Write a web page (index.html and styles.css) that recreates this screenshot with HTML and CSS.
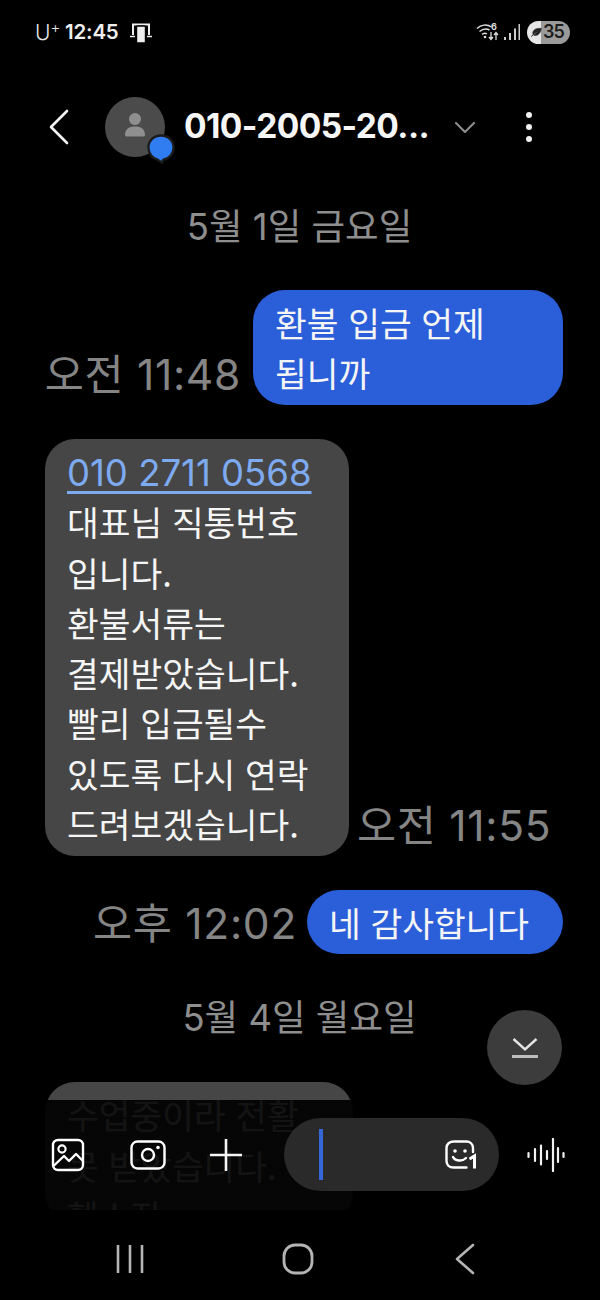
FILE: index.html
```html
<!DOCTYPE html>
<html lang="ko">
<head>
<meta charset="utf-8">
<title>메시지</title>
<link rel="stylesheet" href="styles.css">
</head>
<body>
<div class="screen">
  <div class="status">
    <span class="carrier">U<sup>+</sup></span>
    <span class="clock">12:45</span>
    <svg class="st-cast" width="22" height="22" viewBox="0 0 22 22"><path d="M3 14V3.500h16V14" fill="none" stroke="#eee" stroke-width="2"/><rect x="6.500" y="5" width="9" height="17" rx="1" fill="#eee" stroke="#000" stroke-width="1.400"/><path d="M0 15.500h5M17 15.500h5" stroke="#eee" stroke-width="1.600"/></svg>
    <span class="st-space"></span>
    <svg class="st-wifi" width="24" height="20" viewBox="0 0 24 20"><g fill="none" stroke="#ddd" stroke-width="1.500"><path d="M1 6.500C5 2.500 11 2 15.500 5"/><path d="M3.500 9.500C7 6.500 10.500 6.300 13.500 8"/><path d="M6 12.500C7.500 11 9.500 11 11 12"/></g><circle cx="9" cy="15" r="1.300" fill="#ddd"/><text x="15" y="7.500" class="st-six">6</text><path d="M15 10v7M13 15l2 2.500 2-2.500M20 18v-7M18 13l2-2.500 2 2.500" fill="none" stroke="#ddd" stroke-width="1.300"/></svg>
    <svg class="st-signal" width="16" height="16" viewBox="0 0 16 16"><path d="M1 16v-3M6 16V9M11 16V4.500M15.500 16V0" stroke="#ccc" stroke-width="2"/></svg>
    <div class="battery">
      <svg class="leaf" width="11" height="11" viewBox="0 0 15 13"><path d="M14 1C8 .5 3 2 2.500 7c-.2 2 1 3.500 3 3.500C11 10.500 13 6 14 1zM0 12.500C3 8.500 6 6.500 9 5" fill="#222" stroke="#222" stroke-width="1"/></svg>
      <span class="batt-num">35</span>
    </div>
  </div>

  <header class="head">
    <svg class="back" width="20" height="36" viewBox="0 0 20 36"><path d="M18 2 2 18l16 16" fill="none" stroke="#f2f2f2" stroke-width="2.600" stroke-linecap="round" stroke-linejoin="round"/></svg>
    <div class="avatar">
      <svg width="60" height="60" viewBox="0 0 60 60"><circle cx="30" cy="22" r="6" fill="#8f8f8f"/><path d="M20 38c0-6 4-8.500 10-8.500S40 32 40 38c0 1-1 1.500-2 1.500H22c-1 0-2-.5-2-1.500z" fill="#8f8f8f"/></svg>
      <svg class="chat-badge" width="28" height="30" viewBox="0 0 30 32"><path d="M15 1.500C7.500 1.500 1.500 7 1.500 14.500c0 6.500 4.500 11.500 10 13l4.500 3 1.500-3c6.500-1 11-6.500 11-13C28.500 7 22.500 1.500 15 1.500z" fill="#2f7df0" stroke="#1c1c1c" stroke-width="2.500"/></svg>
    </div>
    <h1 class="title">010-2005-20...</h1>
    <svg class="caret" width="22" height="13" viewBox="0 0 22 13"><path d="M2 2l9 9 9-9" fill="none" stroke="#8a8a8a" stroke-width="2.200" stroke-linecap="round" stroke-linejoin="round"/></svg>
    <div class="kebab"><i></i><i></i><i></i></div>
  </header>

  <main class="thread">
    <div class="date date-a">5월 1일 금요일</div>

    <div class="row row-out row-1">
      <time class="stamp">오전 11:48</time>
      <div class="bubble out b1">환불 입금 언제<br>됩니까</div>
    </div>

    <div class="row row-in row-2">
      <div class="bubble in b2"><a class="tel">010 2711 0568</a><br>대표님 직통번호<br>입니다.<br>환불서류는<br>결제받았습니다.<br>빨리 입금될수<br>있도록 다시 연락<br>드려보겠습니다.</div>
      <time class="stamp">오전 11:55</time>
    </div>

    <div class="row row-out row-3">
      <time class="stamp">오후 12:02</time>
      <div class="bubble out b3">네 감사합니다</div>
    </div>

    <div class="date date-b">5월 4일 월요일</div>

    <div class="row row-in row-4">
      <div class="bubble in b4">수업중이라 전활<br>못 받았습니다.<br>헬스장</div>
    </div>
  </main>

  <div class="scrim"></div>

  <button class="scroll-down">
    <svg width="30" height="22" viewBox="0 0 30 22"><path d="M3.500 2 15 12.500 26.500 2" fill="none" stroke="#e4e4e4" stroke-width="2.400"/><path d="M2 19.500h26" stroke="#bdbdbd" stroke-width="3"/></svg>
  </button>

  <div class="composer">
    <svg class="ic-gallery" width="34" height="34" viewBox="0 0 34 34"><rect x="2" y="2" width="30" height="30" rx="5" fill="none" stroke="#fff" stroke-width="2.400"/><circle cx="11" cy="11" r="3.600" fill="none" stroke="#fff" stroke-width="2.200"/><path d="M2.500 28 13 18l5 5 7-7 7 7" fill="none" stroke="#fff" stroke-width="2.400" stroke-linejoin="round"/></svg>
    <svg class="ic-camera" width="36" height="30" viewBox="0 0 36 30"><rect x="1.500" y="1.500" width="33" height="27" rx="6" fill="none" stroke="#fff" stroke-width="2.400"/><circle cx="18" cy="15" r="6" fill="none" stroke="#fff" stroke-width="2.400"/><circle cx="28" cy="7.500" r="1.800" fill="#fff"/></svg>
    <svg class="ic-plus" width="34" height="34" viewBox="0 0 34 34"><path d="M17 1v32M1 17h32" stroke="#f5f5f5" stroke-width="2.600"/></svg>
    <div class="field">
      <span class="caret-bar"></span>
      <svg class="ic-sticker" width="34" height="32" viewBox="0 0 34 32"><path d="M29 13V9c0-4-3-6.500-6.500-6.500H10C5.500 2.500 2.500 5 2.500 9v13c0 4 3 6.500 7 6.500h13" fill="none" stroke="#fff" stroke-width="2.400" stroke-linecap="round"/><circle cx="11" cy="12" r="1.800" fill="#fff"/><circle cx="21" cy="12" r="1.800" fill="#fff"/><path d="M9 18c2 4 9 5 13 1" fill="none" stroke="#fff" stroke-width="2.400" stroke-linecap="round"/><path d="M25.500 20l5-3v12.500" fill="none" stroke="#fff" stroke-width="3"/></svg>
    </div>
    <svg class="ic-voice" width="38" height="34" viewBox="0 0 38 34"><path d="M1.500 15v4M8 11v12M14 7.500v19M20 13v8M26 1v32M31 10v14M36.500 15v4" stroke="#f2f2f2" stroke-width="2.200" stroke-linecap="round"/></svg>
  </div>

  <nav class="nav">
    <svg width="28" height="28" viewBox="0 0 28 28"><path d="M2 0v28M14 0v28M26 0v28" stroke="#b4b4b4" stroke-width="2.600"/></svg>
    <svg class="nav-home" width="32" height="32" viewBox="0 0 32 32"><rect x="2" y="2" width="28" height="28" rx="11" fill="none" stroke="#b4b4b4" stroke-width="2.800"/></svg>
    <svg width="20" height="32" viewBox="0 0 20 32"><path d="M18 2 2 16l16 14" fill="none" stroke="#b4b4b4" stroke-width="2.600" stroke-linecap="round" stroke-linejoin="round"/></svg>
  </nav>
</div>
</body>
</html>
```
FILE: styles.css
```css
* { box-sizing: border-box; }
html, body { margin: 0; padding: 0; background: #000; }
body { font-family: "Inter", "Noto Sans CJK KR", sans-serif; }

.screen { position: relative; width: 600px; height: 1300px; overflow: hidden; background: #000; }

.status { display: flex; align-items: center; height: 64px; padding: 0 30px 0 35px; color: #eee; }
.carrier { font: 300 21px/1 "Inter", sans-serif; width: 30px; color: #e4e4e4; }
.carrier sup { font-size: 15px; line-height: 0; vertical-align: 7px; }
.clock { font: 600 20.500px/1 "Inter", sans-serif; letter-spacing: -.2px; }
.st-cast { margin-left: 11px; }
.st-space { flex: 1; }
.st-wifi { margin-right: 4px; }
.st-six { font: 700 9px "Inter", sans-serif; fill: #ddd; }
.st-signal { margin-right: 7px; }
.battery { display: flex; align-items: center; width: 43px; height: 23px; border-radius: 12px; padding-left: 4px; background: linear-gradient(90deg, #e6e6e6 0 14px, #9a9a9a 14px); }
.batt-num { font: 600 18px/1 "Inter", sans-serif; color: #1c1c1c; letter-spacing: -1px; margin-left: 1px; }

.head { display: flex; align-items: center; height: 64px; margin-top: 31px; }
.back { margin-left: 49px; }
.avatar { position: relative; width: 60px; height: 60px; margin-left: 36px; border-radius: 50%; background: #4b4b4b; }
.avatar svg { display: block; }
.chat-badge { position: absolute; left: 42px; top: 37px; }
.title { margin: 0 0 0 19px; width: 270px; font: 700 33.500px/1 "Inter", sans-serif; color: #f6f6f6; letter-spacing: -.6px; white-space: nowrap; }
.caret { margin-left: 0; }
.kebab { display: flex; flex-direction: column; gap: 6px; margin-left: 50px; }
.kebab i { width: 6px; height: 6px; border-radius: 50%; background: #f2f2f2; }

.thread { height: 1051px; overflow: hidden; padding: 0 37px 0 45px; display: flex; flex-direction: column; }
.date { margin-right: 9px; text-align: center; color: #8e8e8e; font-size: 36.500px; line-height: 44px; }
.date-a { margin-top: 46px; }
.date-b { margin-top: 42px; }
.row { display: flex; align-items: flex-end; gap: 12px; }
.row-out { justify-content: flex-end; }
.row-1 { margin-top: 41px; }
.row-2 { margin-top: 34px; gap: 8px; }
.row-3 { margin-top: 34px; gap: 10px; }
.row-4 { margin-top: 42px; }
.stamp { flex: none; color: #858585; font-size: 42.500px; line-height: 40px; letter-spacing: .7px; margin-bottom: 10px; white-space: nowrap; }
.bubble { flex: none; padding: 7px 22px 7.500px; border-radius: 30px; font-family: "Noto Sans CJK KR", sans-serif; font-size: 34.500px; line-height: 50.250px; color: #f5f5f5; white-space: nowrap; }
.out { background: #2b5fd9; }
.in { background: #464646; }
.b1 { width: 310px; border-radius: 32px; }
.b2 { width: 304px; }
.b3 { width: 256px; border-radius: 32px; }
.b4 { width: 308px; height: 140px; }
.tel { color: #7eaaf0; font-family: "Inter", sans-serif; line-height: 1; text-decoration: underline; text-underline-offset: 5px; font-size: 36.500px; }

.scrim { position: absolute; left: 0; right: 0; top: 1100px; height: 200px; background: linear-gradient(#000000eb, #000000eb 110px, #000 110px); }

.scroll-down { position: absolute; left: 487px; top: 1010px; width: 75px; height: 75px; border: 0; border-radius: 50%; background: #3c3c3c; display: flex; align-items: center; justify-content: center; padding: 0; }

.composer { position: absolute; left: 51px; top: 1118px; width: 515px; height: 73px; display: flex; align-items: center; }
.ic-camera { margin-left: 45px; }
.ic-plus { margin-left: 43px; }
.field { display: flex; align-items: center; justify-content: space-between; width: 215px; height: 73px; margin-left: 41px; padding: 0 21px 0 35px; border-radius: 37px; background: #2a2a2a; }
.caret-bar { width: 4px; height: 51px; background: #3566d8; }
.ic-voice { margin-left: 28px; }

.nav { position: absolute; left: 116px; top: 1243px; display: flex; align-items: center; }
.nav-home { margin: 0 141px 0 138px; }
```
